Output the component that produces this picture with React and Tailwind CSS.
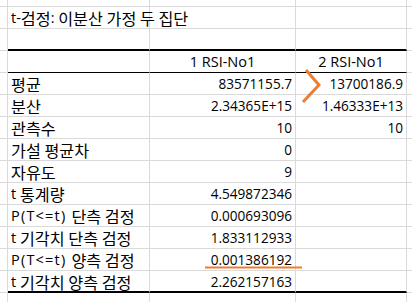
import React from "react";

const rows = [
  { label: "평균", a: "83571155.7", b: "13700186.9" },
  { label: "분산", a: "2.34365E+15", b: "1.46333E+13" },
  { label: "관측수", a: "10", b: "10" },
  { label: "가설 평균차", a: "0", b: "" },
  { label: "자유도", a: "9", b: "" },
  { label: "t 통계량", a: "4.549872346", b: "" },
  { label: "P(T<=t) 단측 검정", a: "0.000693096", b: "" },
  { label: "t 기각치 단측 검정", a: "1.833112933", b: "" },
  { label: "P(T<=t) 양측 검정", a: "0.001386192", b: "" },
  { label: "t 기각치 양측 검정", a: "2.262157163", b: "", last: true },
];

// hangul runs get the CJK face a bit larger, the rest stays in the latin face
const Txt = ({ s }) =>
  s.split(/([\uAC00-\uD7A3][\uAC00-\uD7A3 ]*)/).map((part, i) =>
    /[\uAC00-\uD7A3]/.test(part) ? (
      <span key={i} className="inline-block h-[18px] text-[16.2px] leading-[18px] font-['Noto_Sans_CJK_KR']">
        {part}
      </span>
    ) : (
      <span key={i} className={part.includes("<") ? "inline-block h-[18px] tracking-[1.2px]" : "inline-block h-[18px]"}>
        {part}
      </span>
    )
  );

// one spreadsheet row: a stub column, three used columns, and the cut-off one at the right
const Row = ({ h = "h-[22px]", edge = "", cells = ["", "", ""], head = false }) => {
  const num = head ? "justify-center text-[14.5px]" : "justify-end pr-[3px] text-[13.6px]";
  return (
    <div className={`flex ${h} shrink-0 leading-[18px]`}>
      <div className="w-[8px] shrink-0 border-r border-b border-[#dadada]" />
      <div className={`w-[142px] shrink-0 flex items-center justify-start pl-[3px] whitespace-pre border-r border-[#dadada] border-b ${edge}`}>
        <Txt s={cells[0]} />
      </div>
      <div className={`w-[146px] shrink-0 flex items-center whitespace-pre border-r border-[#dadada] border-b ${edge} ${num}`}>
        {cells[1]}
      </div>
      <div className={`w-[111px] shrink-0 flex items-center whitespace-pre border-r border-[#dadada] border-b ${edge} ${num}`}>
        {cells[2]}
      </div>
      <div className="flex-1 border-b border-[#dadada]" />
    </div>
  );
};

export default function App() {
  return (
    <div
      className="relative w-[412px] h-[302px] overflow-hidden bg-white text-[14.5px] text-black"
      style={{ fontFamily: '"Open Sans", "Noto Sans CJK KR", sans-serif' }}
    >
      <Row h="h-[7px]" />
      <Row cells={["t-검정: 이분산 가정 두 집단", "", ""]} />
      <Row edge="border-b-2 border-b-black" />
      <Row edge="border-b-black" cells={["", "1 RSI-No1", "2 RSI-No1"]} head />
      {rows.map((r) => (
        <Row
          key={r.label}
          edge={r.last ? "border-b-2 border-b-black pt-[2px]" : ""}
          cells={[r.label, r.a, r.b]}
        />
      ))}
      <Row h="h-[22px]" />

      {/* orange pen marks on top of the sheet */}
      <svg className="absolute left-0 top-0 pointer-events-none" width="412" height="302">
        <polyline
          points="306,70 319,85 303,102"
          fill="none"
          stroke="#ed7d31"
          strokeWidth="3"
        />
        <line x1="205" y1="267.5" x2="302" y2="267.5" stroke="#ed7d31" strokeWidth="2" />
      </svg>
    </div>
  );
}
